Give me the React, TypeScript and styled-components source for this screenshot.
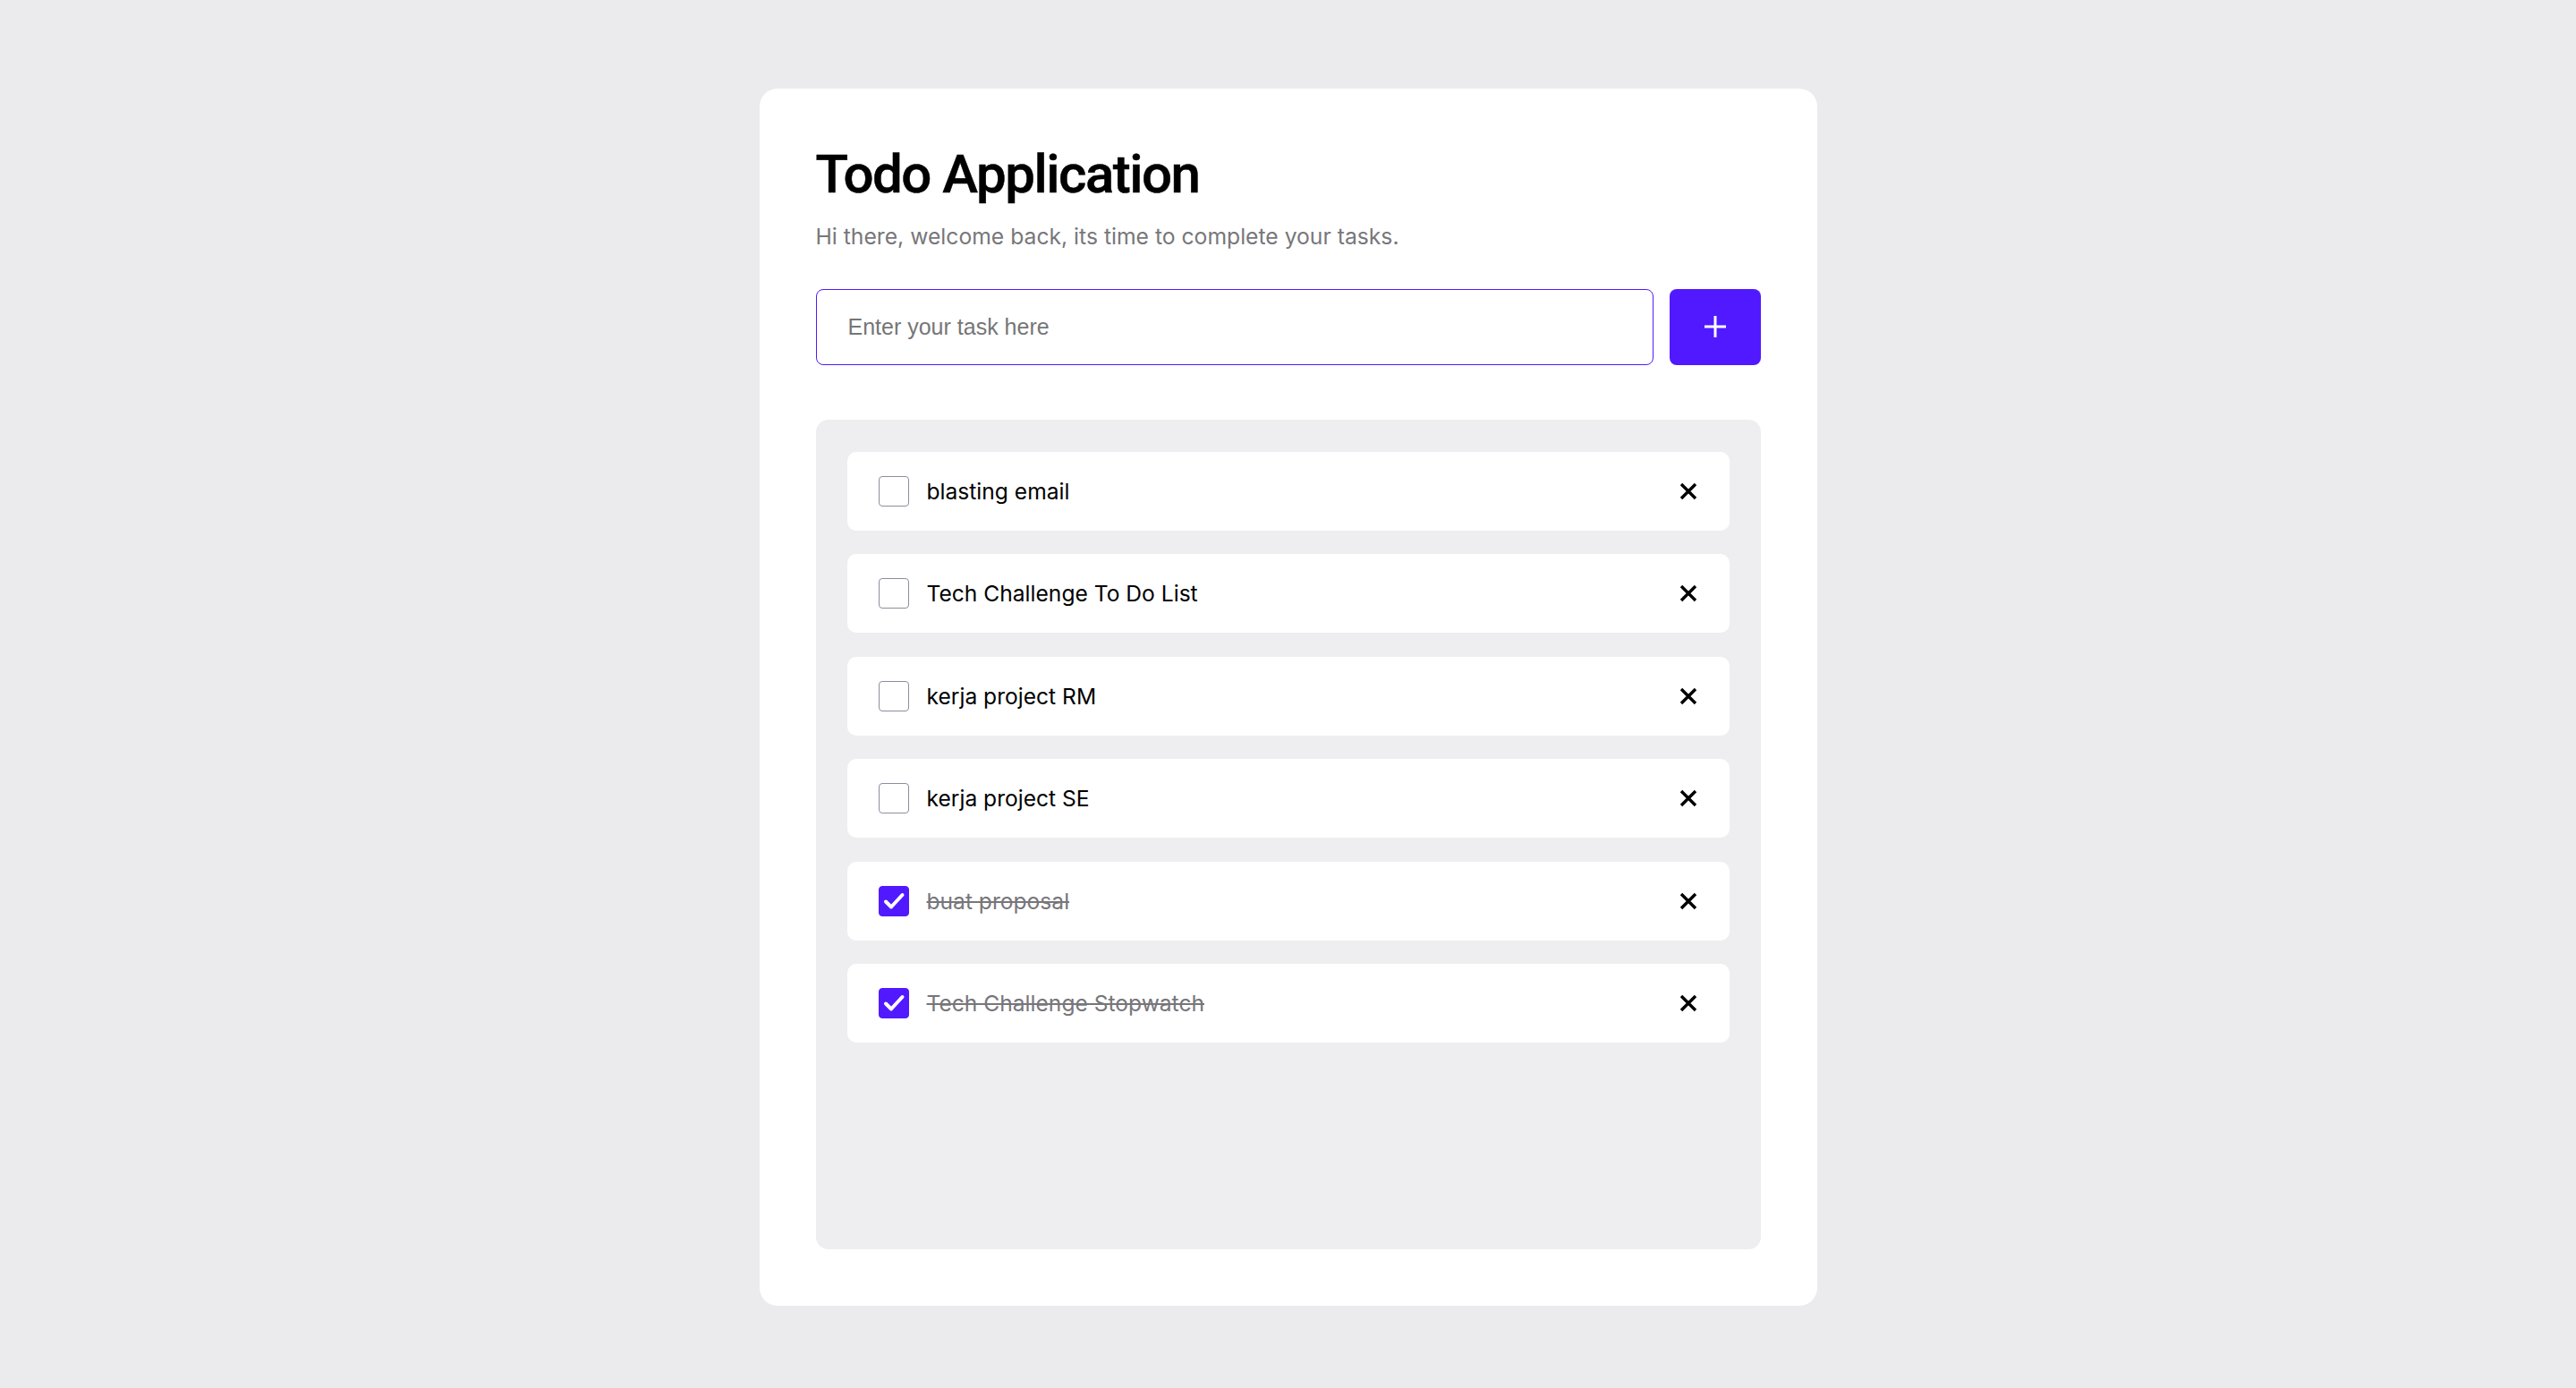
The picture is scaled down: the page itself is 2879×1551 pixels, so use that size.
import React, { useState } from "react";
import styled, { createGlobalStyle } from "styled-components";

interface todoProps {
  id: number,
  title: string,
  done: boolean
}

const GlobalStyle = createGlobalStyle`
  * {
    box-sizing: border-box;
  }
  body {
    margin: 0;
    background: #ebebed;
    font-family: Inter, "Noto Sans", sans-serif;
  }
`

const Page = styled.main`
  min-height: 100vh;
  display: flex;
  justify-content: center;
  align-items: flex-start;
  padding: 99px 0 93px;
`

const Card = styled.section`
  width: 1182px;
  background: #ffffff;
  border-radius: 20px;
  padding: 64px 63px 63px;
`

const Title = styled.h1`
  margin: 0;
  font-family: Roboto, "Liberation Sans", sans-serif;
  font-weight: 500;
  font-size: 60px;
  line-height: 1.08;
  letter-spacing: -1.5px;
  color: #000;
  -webkit-text-stroke: 0.5px #000;
`

const Subtitle = styled.p`
  margin: 18px 0 0;
  font-size: 24.7px;
  line-height: 36px;
  color: #77777a;
`

const Form = styled.form`
  display: flex;
  gap: 18px;
  margin-top: 41px;
  height: 85px;
`

const TaskInput = styled.input`
  flex: 1;
  height: 100%;
  border: 1px solid #5119ff;
  border-radius: 8px;
  padding: 0 35px;
  font-family: "Liberation Sans", Arial, sans-serif;
  font-size: 25px;
  color: #222;
  background: #fff;

  &::placeholder {
    color: #767676;
  }

  &:focus {
    outline: none;
    border-color: #5119ff;
  }
`

const AddButton = styled.button`
  width: 102px;
  height: 100%;
  border: none;
  border-radius: 8px;
  background: #5119ff;
  display: flex;
  align-items: center;
  justify-content: center;
  cursor: pointer;
  padding: 0;
`

const List = styled.ul`
  list-style: none;
  margin: 61px 0 0;
  padding: 36px 35px;
  height: 927px;
  background: #eeeef0;
  border-radius: 14px;
  display: flex;
  flex-direction: column;
  gap: 26.5px;
`

const Item = styled.li`
  height: 88px;
  flex-shrink: 0;
  background: #fff;
  border-radius: 10px;
  padding: 0 36px 0 35px;
  display: flex;
  align-items: center;
  gap: 20px;
`

const Check = styled.button<{ $checked: boolean }>`
  width: 34px;
  height: 34px;
  padding: 0;
  border-radius: 4px;
  border: 1px solid ${props => props.$checked ? "#5119ff" : "#8f8d9b"};
  background: ${props => props.$checked ? "#5119ff" : "#fff"};
  display: flex;
  align-items: center;
  justify-content: center;
  cursor: pointer;
  flex-shrink: 0;
`

const Label = styled.span<{ $done: boolean }>`
  flex: 1;
  font-size: 24.6px;
  color: ${props => props.$done ? "#77767b" : "#000"};
  text-decoration: ${props => props.$done ? "line-through" : "none"};
  text-decoration-thickness: 2px;
`

const RemoveButton = styled.button`
  width: 20px;
  height: 20px;
  padding: 0;
  border: none;
  background: none;
  cursor: pointer;
  display: flex;
`

const initialTodos: Array<todoProps> = [
  { id: 1, title: "blasting email", done: false },
  { id: 2, title: "Tech Challenge To Do List", done: false },
  { id: 3, title: "kerja project RM", done: false },
  { id: 4, title: "kerja project SE", done: false },
  { id: 5, title: "buat proposal", done: true },
  { id: 6, title: "Tech Challenge Stopwatch", done: true },
]

const App = () => {
  const [todos, setTodos] = useState(initialTodos)
  const [text, setText] = useState("")

  const addTodo = (e: React.FormEvent) => {
    e.preventDefault()
    if (!text.trim()) return
    setTodos(prev => [{ id: Date.now(), title: text.trim(), done: false }, ...prev])
    setText("")
  }

  const toggle = (id: number) =>
    setTodos(prev => prev.map(t => t.id === id ? { ...t, done: !t.done } : t))

  const remove = (id: number) =>
    setTodos(prev => prev.filter(t => t.id !== id))

  return (
    <>
      <GlobalStyle />
      <Page>
        <Card>
          <Title>Todo Application</Title>
          <Subtitle>Hi there, welcome back, its time to complete your tasks.</Subtitle>
          <Form onSubmit={addTodo}>
            <TaskInput
              autoFocus
              value={text}
              onChange={e => setText(e.target.value)}
              placeholder="Enter your task here"
            />
            <AddButton type="submit" aria-label="Add task">
              <svg width="26" height="26" viewBox="0 0 26 26">
                <path d="M13 1v24M1 13h24" stroke="#fff" strokeWidth="3" />
              </svg>
            </AddButton>
          </Form>
          <List>
            {todos.map(item => (
              <Item key={item.id}>
                <Check $checked={item.done} onClick={() => toggle(item.id)} aria-label="toggle">
                  {item.done && (
                    <svg width="28" height="28" viewBox="0 0 28 28">
                      <path d="M5 14.5l6 6L23.5 7" fill="none" stroke="#fff" strokeWidth="4" strokeLinecap="round" strokeLinejoin="round" />
                    </svg>
                  )}
                </Check>
                <Label $done={item.done}>{item.title}</Label>
                <RemoveButton onClick={() => remove(item.id)} aria-label="remove">
                  <svg width="20" height="20" viewBox="0 0 20 20">
                    <path d="M2 2l16 16M18 2L2 18" stroke="#000" strokeWidth="3.4" />
                  </svg>
                </RemoveButton>
              </Item>
            ))}
          </List>
        </Card>
      </Page>
    </>
  );
};

export default App;
